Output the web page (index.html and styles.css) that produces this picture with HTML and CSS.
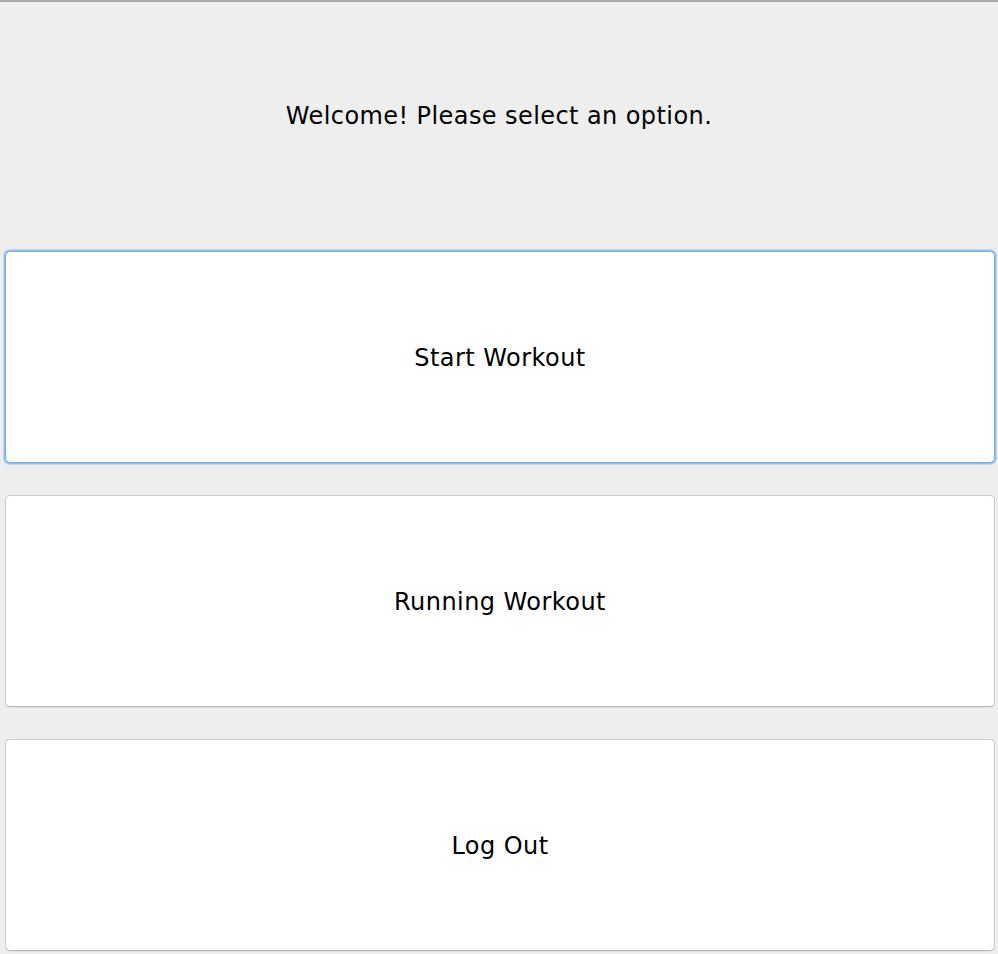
FILE: index.html
```html
<!DOCTYPE html>
<html>
<head>
<meta charset="utf-8">
<link rel="stylesheet" href="styles.css">
</head>
<body>
<div class="window">
  <header class="header">
    <p class="welcome">Welcome! Please select an option.</p>
  </header>
  <main class="options">
    <button class="option focused">Start Workout</button>
    <button class="option">Running Workout</button>
    <button class="option">Log Out</button>
  </main>
</div>
</body>
</html>
```
FILE: styles.css
```css
html, body {
  margin: 0;
  padding: 0;
  background: #eeeeee;
}
.window {
  width: 998px;
  height: 954px;
  box-sizing: border-box;
  border-top: 2px solid #ababab;
  font-family: "DejaVu Sans", Verdana, sans-serif;
  color: #000;
}
.header {
  height: 249px;
  display: flex;
  justify-content: center;
}
.welcome {
  margin: 0;
  padding-top: 100px;
  font-size: 24px;
  line-height: 28px;
  letter-spacing: 0.42px;
}
.options {
  display: flex;
  flex-direction: column;
  gap: 32px;
  padding: 0 3px 0 5px;
}
.option {
  height: 212px;
  background: #ffffff;
  border: 1px solid #c8c8c8;
  border-bottom-color: #b5b5b5;
  border-radius: 5px;
  font-family: inherit;
  font-size: 24px;
  letter-spacing: 0.45px;
  color: #000;
  padding: 2px 0 0;
  box-shadow: 0 1px 0 rgba(0,0,0,0.06);
}
.option.focused {
  border-color: #7aaef0;
  box-shadow: 0 0 0 1px #8cbcf5, 0 0 0 2px rgba(143,189,244,0.45);
}
```
